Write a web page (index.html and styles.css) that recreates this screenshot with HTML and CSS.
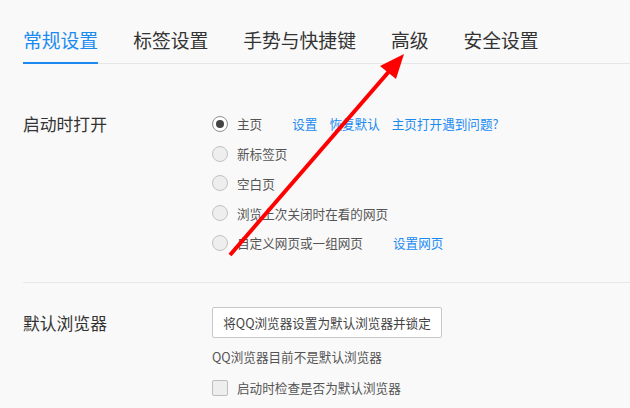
FILE: index.html
```html
<!DOCTYPE html>
<html lang="zh-CN">
<head>
<meta charset="utf-8">
<link rel="stylesheet" href="styles.css">
</head>
<body>
<div class="page">
  <nav class="tabs">
    <span class="tab active">常规设置</span>
    <span class="tab">标签设置</span>
    <span class="tab">手势与快捷键</span>
    <span class="tab">高级</span>
    <span class="tab">安全设置</span>
  </nav>

  <section class="section startup">
    <div class="label">启动时打开</div>
    <div class="options">
      <div class="row"><span class="radio checked"></span><span class="opt">主页</span><a class="link first">设置</a><a class="link">恢复默认</a><a class="link">主页打开遇到问题?</a></div>
      <div class="row"><span class="radio"></span><span class="opt">新标签页</span></div>
      <div class="row"><span class="radio"></span><span class="opt">空白页</span></div>
      <div class="row"><span class="radio"></span><span class="opt">浏览上次关闭时在看的网页</span></div>
      <div class="row"><span class="radio"></span><span class="opt">自定义网页或一组网页</span><a class="link first">设置网页</a></div>
    </div>
  </section>

  <section class="section default">
    <div class="label label2">默认浏览器</div>
    <div class="options">
      <button class="btn">将QQ浏览器设置为默认浏览器并锁定</button>
      <div class="status">QQ浏览器目前不是默认浏览器</div>
      <div class="check-row"><span class="checkbox"></span><span class="opt">启动时检查是否为默认浏览器</span></div>
    </div>
  </section>

  <svg class="arrow" width="630" height="408" viewBox="0 0 630 408">
    <line x1="230" y1="255" x2="392" y2="68" stroke="#ff0000" stroke-width="4"/>
    <polygon points="404,54 380,66 396,79" fill="#ff0000"/>
  </svg>
</div>
</body>
</html>
```

FILE: styles.css
```css
* { box-sizing: border-box; }
html, body {
  margin: 0;
  padding: 0;
  background: #f9f9f9;
}
body {
  font-family: "Noto Sans CJK SC", "Noto Sans", sans-serif;
  color: #333;
  width: 630px;
  height: 408px;
  overflow: hidden;
}
.page {
  position: relative;
  width: 630px;
  height: 408px;
}
.tabs {
  display: flex;
  gap: 35px;
  margin-left: 23px;
  height: 64px;
  border-bottom: 1px solid #e6e6e6;
}
.tab {
  font-size: 18.8px;
  line-height: 24px;
  padding-top: 28px;
  height: 64px;
  margin-bottom: -1px;
  color: #333;
  white-space: nowrap;
}
.tab.active {
  color: #1b8bf2;
  box-shadow: inset 0 -2px 0 #1b8bf2;
}
.section {
  display: grid;
  grid-template-columns: 189px 1fr;
  margin-left: 23px;
}
.startup {
  padding-top: 109px;
  padding-top: 45px;
  padding-bottom: 24px;
  border-bottom: 1px solid #e8e8e8;
}
.label {
  font-size: 16.8px;
  line-height: 30px;
  color: #333;
  white-space: nowrap;
}
.row {
  display: flex;
  align-items: center;
  height: 29.75px;
  font-size: 12.6px;
  white-space: nowrap;
}
.radio {
  width: 16px;
  height: 16px;
  border-radius: 50%;
  border: 1px solid #c2c2c2;
  background: #eeeeee;
  margin-right: 9px;
  flex: none;
  position: relative;
}
.radio.checked {
  background: #ffffff;
  border-color: #8f8f8f;
}
.radio.checked::after {
  content: "";
  position: absolute;
  left: 3px;
  top: 3px;
  width: 8px;
  height: 8px;
  border-radius: 50%;
  background: #444;
}
.opt {
  color: #555;
}
.link {
  color: #1b8bf2;
  margin-left: 12px;
}
.link.first {
  margin-left: 30px;
}
.default {
  padding-top: 24px;
}
.label2 {
  line-height: 31px;
  padding-top: 1px;
}
.options {
  display: flex;
  flex-direction: column;
  align-items: flex-start;
}
.btn {
  font-family: inherit;
  font-size: 12.6px;
  color: #444;
  background: #ffffff;
  border: 1px solid #c8c8c8;
  border-radius: 2px;
  height: 31px;
  width: 230px;
  padding: 0;
  text-align: center;
  white-space: nowrap;
}
.status {
  font-size: 12.6px;
  color: #555;
  line-height: 20px;
  margin-top: 9px;
}
.check-row {
  display: flex;
  align-items: center;
  height: 22px;
  margin-top: 10px;
  font-size: 12.6px;
}
.checkbox {
  width: 16px;
  height: 16px;
  border: 1px solid #bdbdbd;
  background: #eeeeee;
  border-radius: 2px;
  margin-right: 9px;
}
.arrow {
  position: absolute;
  left: 0;
  top: 0;
  pointer-events: none;
}
```
